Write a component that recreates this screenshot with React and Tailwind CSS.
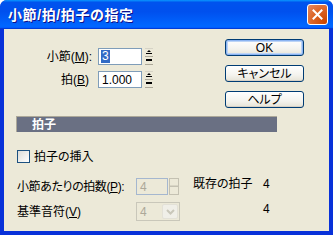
import React from 'react';

const Spin = ({ disabled = false }) => (
    <svg width="10" height="17" viewBox="0 0 10 17" className="shrink-0">
        {disabled ? (
            <g fill="none" stroke="#c4c1b2">
                <rect x="0.5" y="0.5" width="9" height="7.5" />
                <rect x="0.5" y="8.5" width="9" height="8" />
            </g>
        ) : (
            <g>
                <line x1="1" y1="0.5" x2="9" y2="0.5" stroke="#d6d3c6" />
                <path d="M3 4 L5 2 L7 4 Z" fill="#000" />
                <line x1="2" y1="5.5" x2="8" y2="5.5" stroke="#000" />
                <line x1="1" y1="8.5" x2="9" y2="8.5" stroke="#aca899" />
                <line x1="2" y1="11.5" x2="8" y2="11.5" stroke="#000" />
                <line x1="2" y1="12.5" x2="8" y2="12.5" stroke="#000" />
                <line x1="1" y1="16.5" x2="9" y2="16.5" stroke="#aca899" />
            </g>
        )}
    </svg>
);

const XpButton = ({ children, isDefault = false }) => (
    <button
        className={`w-[79px] h-[17px] rounded-[3px] border border-[#003c74] bg-[linear-gradient(to_bottom,#ffffff,#f4f3ee_60%,#e6e3d6)] text-[12px] leading-none text-black flex items-center justify-center ${isDefault ? "shadow-[inset_0_0_0_1px_#8cb4f2,inset_0_0_0_2px_#bcd4f6]" : "shadow-[inset_0_-1px_0_#d6d0c5]"}`}
    >
        {children}
    </button>
);

const App = () => {
    return (
        <div className="w-[333px] h-[235px] flex flex-col bg-[#0831d9] rounded-t-[7px] overflow-hidden [font-family:'Liberation_Sans','Noto_Sans_CJK_JP',sans-serif] [font-feature-settings:'palt'] text-[12px] text-black">
            {/* title bar */}
            <div className="h-[29px] shrink-0 flex items-center justify-between pl-[8px] pr-[5px] bg-[linear-gradient(to_bottom,#0997ff,#0053ee_8%,#0050ee_40%,#0066ff_88%,#0066ff_93%,#005bff_95%,#003dd7_96%,#003dd7)]">
                <span className="text-white font-bold text-[14px] tracking-[0.6px] [text-shadow:1px_1px_#0f1089] pt-[2px]">小節/拍/拍子の指定</span>
                <div className="w-[21px] h-[21px] rounded-[3px] border border-white bg-[radial-gradient(circle_at_90%_90%,#cc4600,#dc6527_55%,#e38965)] flex items-center justify-center">
                    <svg width="11" height="11" viewBox="0 0 11 11">
                        <path d="M1.5 1.5 L9.5 9.5 M9.5 1.5 L1.5 9.5" stroke="#fff" strokeWidth="2" strokeLinecap="square" />
                    </svg>
                </div>
            </div>

            {/* body */}
            <div className="flex-1 mx-[4px] mb-[4px] bg-[#ece9d8] flex flex-col">
                <div className="h-[87px] shrink-0 flex justify-between pt-[10px] pr-[25px]">
                    <div className="flex flex-col gap-[6px] pt-[9px]">
                        <div className="flex items-center h-[17px]">
                            <span className="w-[88px] text-right">小節(<u>M</u>):</span>
                            <div className="ml-[6px] w-[44px] h-[17px] border border-[#7f9db9] bg-white flex items-center pl-[2px]">
                                <span className="bg-[#316ac5] text-white leading-[13px] px-[1px]">3</span>
                            </div>
                            <div className="ml-[2px]"><Spin /></div>
                        </div>
                        <div className="flex items-center h-[17px]">
                            <span className="w-[85px] mr-[3px] text-right">拍(<u>B</u>)</span>
                            <div className="ml-[6px] w-[44px] h-[17px] border border-[#7f9db9] bg-white flex items-center pl-[3px]">
                                <span className="leading-none">1.000</span>
                            </div>
                            <div className="ml-[2px]"><Spin /></div>
                        </div>
                    </div>
                    <div className="flex flex-col gap-[9px]">
                        <XpButton isDefault>OK</XpButton>
                        <XpButton>キャンセル</XpButton>
                        <XpButton>ヘルプ</XpButton>
                    </div>
                </div>

                <div className="ml-[12px] w-[261px] h-[16px] shrink-0 bg-[#6a7083] border-t border-l border-[#aca899] border-b-white border-r-white flex items-center pl-[15px]">
                    <span className="text-white font-bold leading-none">拍子</span>
                </div>

                <div className="mt-[18px] ml-[13px] flex items-center h-[13px]">
                    <div className="w-[13px] h-[13px] border border-[#1c5180] bg-[linear-gradient(135deg,#dcdcd7,#ffffff)]" />
                    <span className="ml-[4px]">拍子の挿入</span>
                </div>

                <div className="mt-[15px] ml-[13px] flex items-center h-[17px]">
                    <span className="w-[119px] tracking-[-0.4px]">小節あたりの拍数(<u>P</u>):</span>
                    <div className="w-[32px] h-[17px] border border-[#a5b7cf] flex items-center pl-[3px] text-[#aca899]">4</div>
                    <div className="ml-[1px]"><Spin disabled /></div>
                    <span className="ml-[14px] w-[70px] self-start leading-[13px]">既存の拍子</span>
                    <span className="self-start leading-[13px]">4</span>
                </div>

                <div className="mt-[7px] ml-[13px] flex items-center h-[19px]">
                    <span className="w-[119px]">基準音符(<u>V</u>)</span>
                    <div className="w-[44px] h-[19px] border border-[#c9c7ba] flex items-center justify-between pl-[3px] pr-[1px]">
                        <span className="text-[#aca899]">4</span>
                        <div className="w-[16px] h-[15px] rounded-[2px] bg-[#f0efe8] border border-[#e3e1d7] flex items-center justify-center">
                            <svg width="9" height="6" viewBox="0 0 9 6">
                                <path d="M1 1 L4.5 4.5 L8 1" stroke="#c9c7ba" strokeWidth="2" fill="none" />
                            </svg>
                        </div>
                    </div>
                    <span className="ml-[83px] self-start leading-[13px] pt-[1px]">4</span>
                </div>
            </div>
        </div>
    );
};

export default App;
